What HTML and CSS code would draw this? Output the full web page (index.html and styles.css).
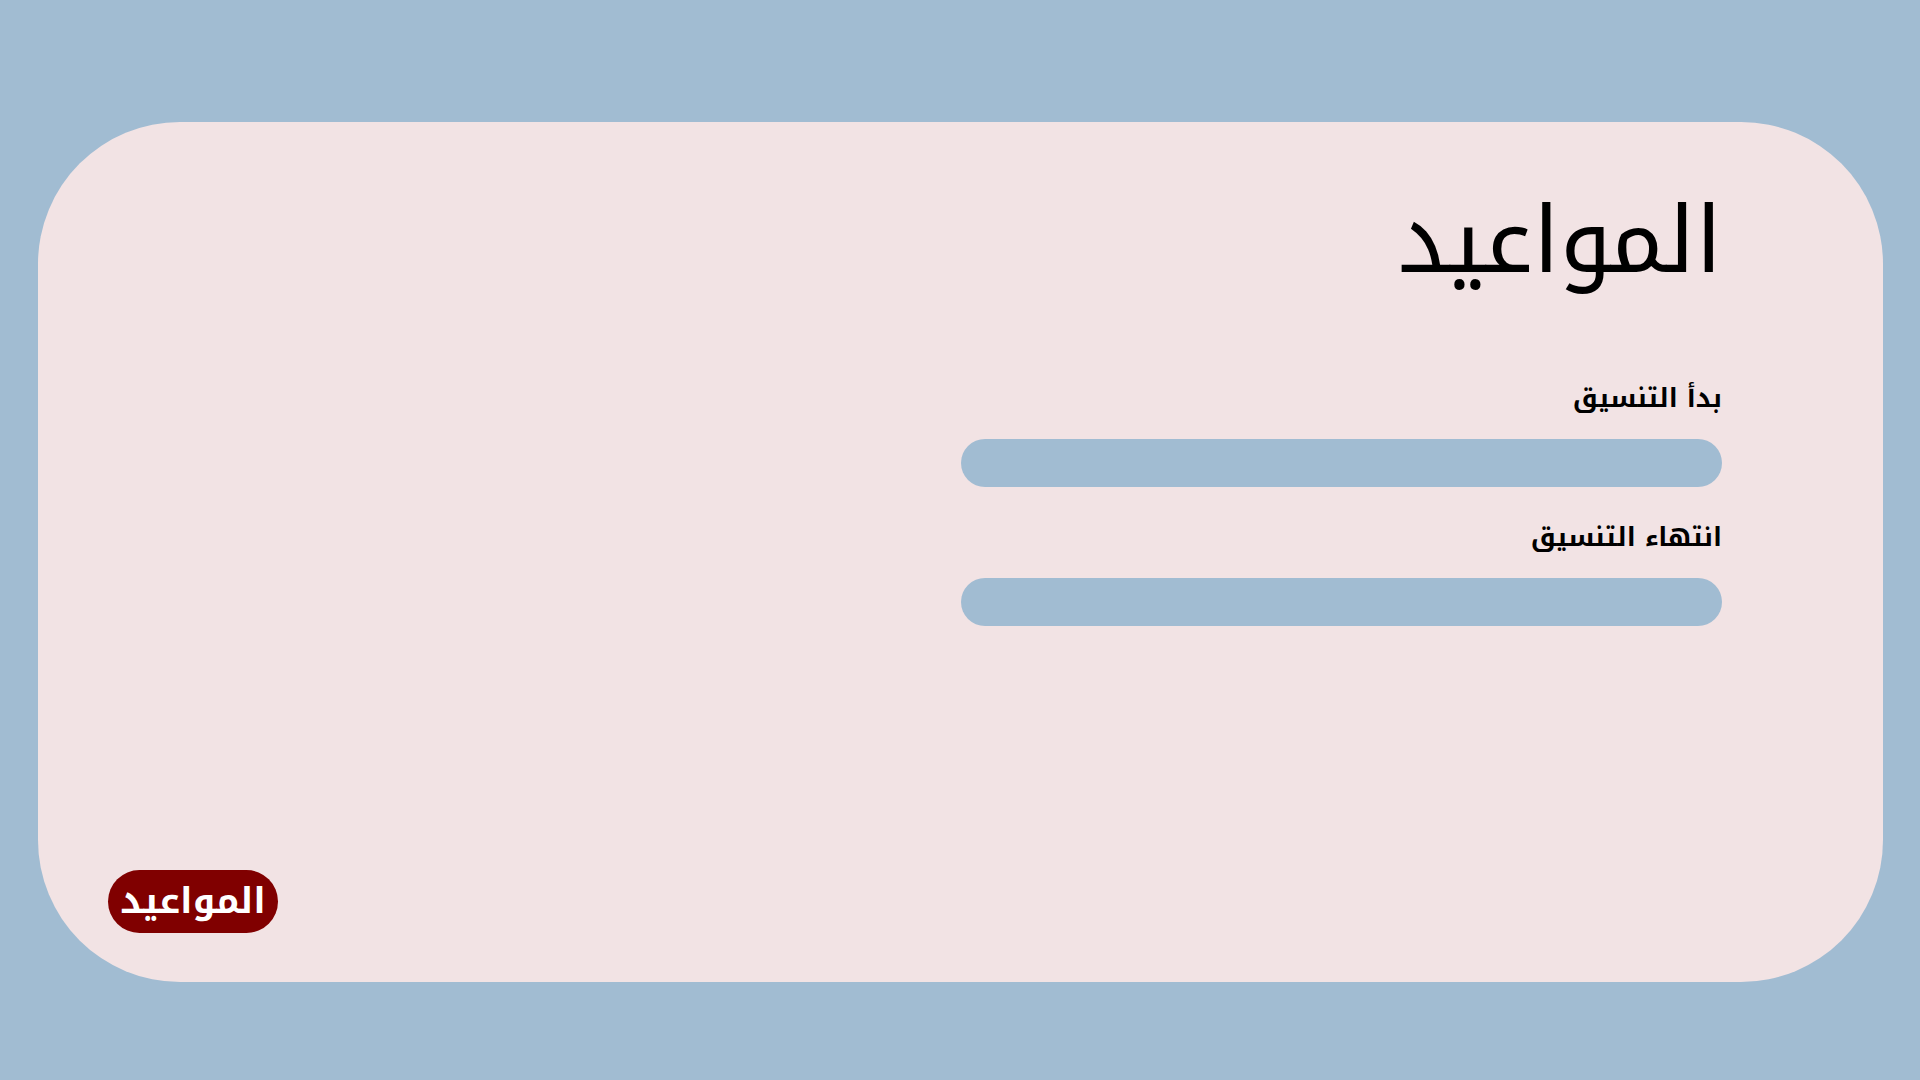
FILE: index.html
```html
<!DOCTYPE html>
<html lang="ar" dir="rtl">
<head>
<meta charset="utf-8">
<title>المواعيد</title>
<link rel="stylesheet" href="styles.css">
</head>
<body>
<div class="page">
  <main class="card">
    <div class="grid">
      <section class="form">
        <h1 class="title">المواعيد</h1>
        <label class="label label-first">بدأ التنسيق</label>
        <div class="field"></div>
        <label class="label">انتهاء التنسيق</label>
        <div class="field"></div>
      </section>
      <section class="empty"></section>
    </div>
    <div class="footer">
      <button class="btn">المواعيد</button>
    </div>
  </main>
</div>
</body>
</html>
```
FILE: styles.css
```css
html, body {
  margin: 0;
  padding: 0;
  background: #a1bcd2;
  font-family: "Noto Kufi Arabic", "DejaVu Sans", sans-serif;
}
.page {
  width: 1920px;
  height: 1080px;
  box-sizing: border-box;
  padding: 122px 37px 98px 38px;
}
.card {
  height: 100%;
  background: #f2e3e4;
  border-radius: 142px;
  display: flex;
  flex-direction: column;
  justify-content: space-between;
}
.grid {
  display: grid;
  grid-template-columns: 1fr 1fr;
  padding: 50px 161px 0 161px;
}
.form {
  display: flex;
  flex-direction: column;
}
.title {
  margin: 0;
  font-size: 92px;
  font-weight: normal;
  line-height: 140px;
  color: #000;
}
.label {
  font-size: 26px;
  font-weight: 700;
  line-height: 50px;
  color: #000;
  margin-top: 26px;
  margin-bottom: 15px;
}
.label-first {
  margin-top: 62px;
}
.field {
  height: 48px;
  border-radius: 24px;
  background: #a1bcd2;
}
.footer {
  display: flex;
  justify-content: flex-end;
  padding: 0 108px 49px 70px;
}
.btn {
  width: 170px;
  height: 63px;
  border: none;
  border-radius: 32px;
  background: #800000;
  color: #fff;
  font-family: "Noto Kufi Arabic", "DejaVu Sans", sans-serif;
  font-weight: bold;
  font-size: 36px;
  line-height: 63px;
  padding: 0;
}
```
